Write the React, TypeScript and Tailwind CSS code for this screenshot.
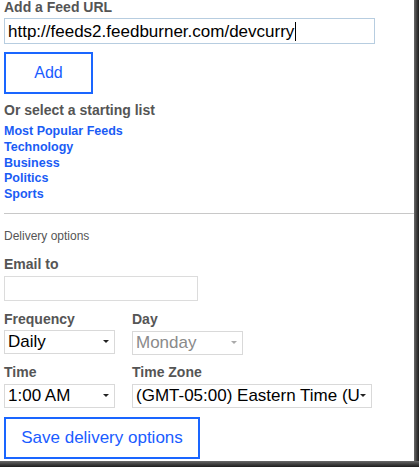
import React from "react";

const font = { fontFamily: '"Liberation Sans", Arial, sans-serif' };

function Select({ value, width, disabled }: { value: string; width: string; disabled?: boolean }) {
  return (
    <div className={`${width} h-[24px] border border-[#d9d9d9] bg-white flex items-center pl-[3px] pr-[5px] overflow-hidden`}>
      <span
        className={`flex-1 whitespace-nowrap overflow-hidden text-[17px] leading-none ${
          disabled ? "text-[#8a8a8a]" : "text-black"
        }`}
      >
        {value}
      </span>
      <span
        className={`w-0 h-0 border-l-[3px] border-r-[3px] border-t-[3px] border-l-transparent border-r-transparent ${
          disabled ? "border-t-[#aaa]" : "border-t-[#222]"
        }`}
      />
    </div>
  );
}

function Label({ children, className = "" }: { children: React.ReactNode; className?: string }) {
  return <div className={`text-[14px] leading-[16px] font-bold text-[#555] ${className}`}>{children}</div>;
}

export default function App() {
  const lists = ["Most Popular Feeds", "Technology", "Business", "Politics", "Sports"];
  return (
    <div className="w-[419px] h-[467px] flex flex-col bg-white" style={font}>
      <div className="flex flex-1">
        <div className="w-[414px] pl-1 flex flex-col">
          <div className="text-[14px] leading-[14px] font-bold text-[#555]">Add a Feed URL</div>
          <div className="mt-[4px] w-[371px] h-[26px] border border-[#b7cde0] flex items-center pl-[3px]">
            <span className="text-[17px] leading-none text-black">http://feeds2.feedburner.com/devcurry</span>
            <span className="w-px h-[19px] bg-black ml-px" />
          </div>
          <button className="mt-[8px] w-[89px] h-[42px] border-2 border-[#1a66ff] text-[#1a5cff] text-[16px] flex items-center justify-center">
            Add
          </button>
          <div className="mt-[9px] text-[14px] leading-[14px] font-bold text-[#555]">Or select a starting list</div>
          <div className="mt-[7px] flex flex-col">
            {lists.map((l) => (
              <a key={l} className="text-[12.5px] leading-[15.75px] font-bold text-[#1a5cf5]">
                {l}
              </a>
            ))}
          </div>
          <div className="mt-[10px] h-px bg-[#c8c8c8] w-[410px]" />
          <div className="mt-[16px] text-[12px] leading-[12px] text-[#555]">Delivery options</div>
          <Label className="mt-[14px]">Email to</Label>
          <div className="mt-[4px] w-[194px] h-[25px] border border-[#dcdcdc]" />
          <div className="mt-[10px] flex gap-[17px]">
            <div className="flex flex-col w-[111px]">
              <Label>Frequency</Label>
              <div className="mt-[3px]">
                <Select value="Daily" width="w-[111px]" />
              </div>
            </div>
            <div className="flex flex-col">
              <Label>Day</Label>
              <div className="mt-[4px]">
                <Select value="Monday" width="w-[111px]" disabled />
              </div>
            </div>
          </div>
          <div className="mt-[9px] flex gap-[17px]">
            <div className="flex flex-col w-[111px]">
              <Label>Time</Label>
              <div className="mt-[4px]">
                <Select value="1:00 AM" width="w-[111px]" />
              </div>
            </div>
            <div className="flex flex-col">
              <Label>Time Zone</Label>
              <div className="mt-[4px]">
                <Select value="(GMT-05:00) Eastern Time (U" width="w-[240px]" />
              </div>
            </div>
          </div>
          <button className="mt-[9px] w-[196px] h-[42px] border-2 border-[#1a66ff] text-[#1a5cff] text-[17px] flex items-center justify-center">
            Save delivery options
          </button>
        </div>
        <div className="w-[5px] bg-linear-to-r from-[#6a6a6a] to-[#1e1e1e]" />
      </div>
      <div className="h-[6px] bg-linear-to-b from-[#6a6a6a] to-[#1e1e1e]" />
    </div>
  );
}
